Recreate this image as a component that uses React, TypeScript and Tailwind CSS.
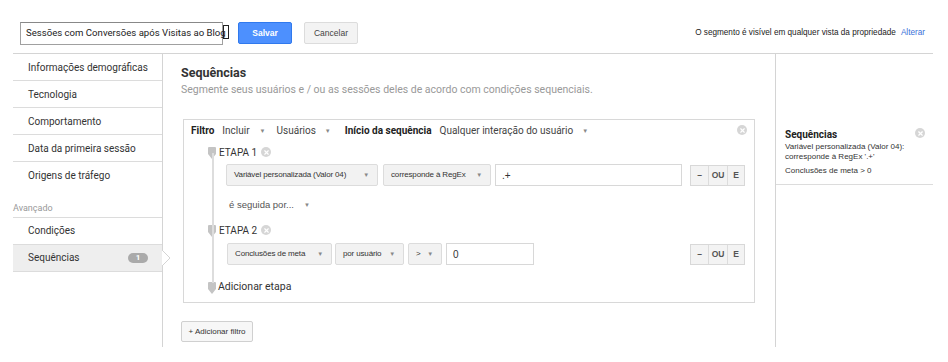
import { X } from "lucide-react";

const ROBOTO = "font-['Roboto','Liberation_Sans',sans-serif]";
const ARIAL = "font-['Liberation_Sans','Arial',sans-serif]";

const navTop = ["Informações demográficas", "Tecnologia", "Comportamento", "Data da primeira sessão", "Origens de tráfego"];

function Caret() {
	return <span className="ml-auto text-[6px] leading-none text-[#888]">▼</span>;
}

function CloseDot({ className = "" }: { className?: string }) {
	return (
		<span className={`inline-flex h-[10px] w-[10px] items-center justify-center rounded-full bg-[#d6d6d6] ${className}`}>
			<X className="h-[7px] w-[7px] text-white" strokeWidth={4} />
		</span>
	);
}

function Pin() {
	return (
		<svg width="8" height="12" viewBox="0 0 8 12" className="shrink-0">
			<path d="M1 0h6a1 1 0 0 1 1 1v6l-4 5-4-5V1a1 1 0 0 1 1-1z" fill="#c4c4c4" />
		</svg>
	);
}

function Select({ label, width }: { label: string; width: string }) {
	return (
		<div className={`flex h-[22px] items-center whitespace-nowrap rounded-[2px] border border-[#dcdcdc] bg-[#f2f2f2] pl-[7px] pr-[8px] text-[8px] tracking-[-0.15px] text-[#333] ${ARIAL} ${width}`}>
			<span>{label}</span>
			<Caret />
		</div>
	);
}

function AndOr() {
	return (
		<div className={`ml-auto flex h-[21px] border border-[#d8d8d8] bg-[#f3f3f3] text-[8.5px] font-bold text-[#555] ${ARIAL}`}>
			<span className="flex w-[18px] items-center justify-center border-r border-[#dcdcdc]">–</span>
			<span className="flex w-[19px] items-center justify-center border-r border-[#dcdcdc]">OU</span>
			<span className="flex w-[16px] items-center justify-center">E</span>
		</div>
	);
}

function StepHeader({ n }: { n: number }) {
	return (
		<div className="flex h-[14px] items-center">
			<div className="flex w-[13px] justify-center pt-[1px]">
				<Pin />
			</div>
			<span className="ml-[1px] text-[10px] text-[#333]">ETAPA {n}</span>
			<CloseDot className="ml-[4px]" />
		</div>
	);
}

export default function App() {
	return (
		<div className={`h-[362px] w-[948px] overflow-hidden bg-white ${ROBOTO}`}>
			<div className="mx-[13px] w-[920px]">
				{/* header */}
				<div className="flex h-[54px] items-start border-b border-[#d4d4d4] pt-[22px] pl-[7px]">
					<div className="flex h-[23px] w-[203px] items-center whitespace-nowrap border border-[#a0a0a0] border-t-[#888] pl-[5px] text-[9.6px] text-[#222]">
						<span>Sessões com Conversões após Visitas ao Blo</span>
						<span className="relative">g<span className="absolute -right-[3px] -top-[1px] h-[14px] w-[6px] border border-[#222]" /></span>
					</div>
					<button className={`ml-[15px] h-[22px] w-[54px] rounded-[2px] border border-[#3079ed] bg-[#4d90fe] text-[8.5px] font-bold text-white ${ARIAL}`}>Salvar</button>
					<button className={`ml-[12px] h-[22px] w-[54px] rounded-[2px] border border-[#dcdcdc] bg-[#f3f3f3] text-[8.5px] text-[#444] ${ARIAL}`}>Cancelar</button>
					<div className={`ml-auto mr-[8px] flex h-[22px] items-center whitespace-nowrap text-[8.2px] text-[#222] ${ARIAL}`}>
						<span>O segmento é visível em qualquer vista da propriedade</span>
						<span className="ml-[5px] text-[#3a6fd8]">Alterar</span>
					</div>
				</div>

				{/* body */}
				<div className="flex h-[293px]">
					<nav className="relative w-[150px] border-r border-[#d4d4d4] text-[10px] text-[#333]">
						{navTop.map((item, i) => (
							<div key={item} className={`flex h-[27px] items-center whitespace-nowrap pl-[15px] ${i < navTop.length - 1 ? "border-b border-[#dcdcdc]" : ""}`}>
								{item}
							</div>
						))}
						<div className="mt-[13px] border-b border-[#dcdcdc] pb-[1px] text-[9px] text-[#999]">Avançado</div>
						<div className="flex h-[27px] items-center border-b border-[#dcdcdc] pl-[15px]">Condições</div>
						<div className="relative flex h-[27px] items-center border-b border-[#dcdcdc] bg-[#eeeeee] pl-[15px]">
							<span>Sequências</span>
							<span className="ml-auto mr-[14px] flex h-[10px] w-[20px] items-center justify-center rounded-full bg-[#aaaaaa] text-[8px] font-bold text-white">1</span>
							<svg width="9" height="16" viewBox="0 0 9 16" className="absolute -right-[9px] top-[5px]">
								<path d="M0 0L8 8L0 16Z" fill="white" />
								<path d="M0 0L8 8L0 16" fill="none" stroke="#d4d4d4" strokeWidth="1" />
							</svg>
						</div>
					</nav>

					<main className="w-[612px] pl-[18px] pt-[10px]">
						<h1 className="text-[12.5px] font-bold leading-[18px] text-[#333]">Sequências</h1>
						<p className="whitespace-nowrap text-[10.5px] leading-[16px] text-[#999]">Segmente seus usuários e / ou as sessões deles de acordo com condições sequenciais.</p>

						<div className="ml-[2px] mt-[21px] h-[184px] w-[572px] border border-[#d8d8d8] pr-[9px] pl-[7px] pt-[3px]">
							<div className="flex h-[14px] items-center whitespace-nowrap text-[10px] text-[#444]">
								<span className="font-bold text-[#222]">Filtro</span>
								<span className="ml-[8px]">Incluir</span>
								<span className="ml-[10px] text-[6px] text-[#888]">▼</span>
								<span className="ml-[11px]">Usuários</span>
								<span className="ml-[9px] text-[6px] text-[#888]">▼</span>
								<span className="ml-[14px] font-bold text-[#222]">Início da sequência</span>
								<span className="ml-[8px]">Qualquer interação do usuário</span>
								<span className="ml-[9px] text-[6px] text-[#888]">▼</span>
								<CloseDot className="ml-auto mr-[-2px]" />
							</div>

							<div className="relative mt-[8px] pl-[14px]">
								<span className="absolute left-[21px] top-[8px] h-[130px] w-[2px] bg-[#dddddd]" />
								<StepHeader n={1} />
								<div className="relative mt-[5px] flex items-center pl-[21px]">
									<Select label="Variável personalizada (Valor 04)" width="w-[152px]" />
									<div className="ml-[5px]"><Select label="corresponde à RegEx" width="w-[108px]" /></div>
									<div className={`ml-[4px] flex h-[22px] w-[187px] items-center border border-[#d8d8d8] pl-[6px] text-[10px] text-[#333] ${ARIAL}`}>.+</div>
									<AndOr />
								</div>
								<div className={`ml-[24px] mt-[12px] flex h-[14px] items-center text-[9.5px] text-[#555] ${ARIAL}`}>
									<span>é seguida por...</span>
									<span className="ml-[10px] text-[6px] text-[#888]">▼</span>
								</div>
								<div className="mt-[11px]">
									<StepHeader n={2} />
								</div>
								<div className="relative mt-[6px] flex items-center pl-[22px]">
									<Select label="Conclusões de meta" width="w-[105px]" />
									<div className="ml-[3px]"><Select label="por usuário" width="w-[69px]" /></div>
									<div className="ml-[4px]"><Select label=">" width="w-[34px]" /></div>
									<div className={`ml-[4px] flex h-[22px] w-[88px] items-center border border-[#d8d8d8] pl-[6px] text-[10px] text-[#333] ${ARIAL}`}>0</div>
									<AndOr />
								</div>
								<div className="mt-[15px] flex h-[14px] items-center">
									<div className="flex w-[13px] justify-center pt-[1px]">
										<Pin />
									</div>
									<span className="text-[10.5px] text-[#333]">Adicionar etapa</span>
								</div>
							</div>
						</div>

						<button className={`mt-[18px] h-[21px] w-[72px] whitespace-nowrap rounded-[2px] border border-[#d0d0d0] bg-[#f7f7f7] text-[8px] text-[#333] ${ARIAL}`}>+ Adicionar filtro</button>
					</main>

					<aside className="w-[158px] border-l border-[#d4d4d4]">
						<div className="mt-[73px] border-b border-[#dcdcdc] pb-[8px] pl-[9px] pr-[8px]">
							<div className="flex items-center justify-between">
								<span className="text-[10px] font-bold text-[#222]">Sequências</span>
								<CloseDot className="-mt-[3px]" />
							</div>
							<p className={`text-[8px] leading-[10px] text-[#333] ${ARIAL}`}>Variável personalizada (Valor 04): corresponde à RegEx '.+'</p>
							<p className={`mt-[4px] text-[8px] leading-[10px] text-[#333] ${ARIAL}`}>Conclusões de meta &gt; 0</p>
						</div>
					</aside>
				</div>
			</div>
		</div>
	);
}
